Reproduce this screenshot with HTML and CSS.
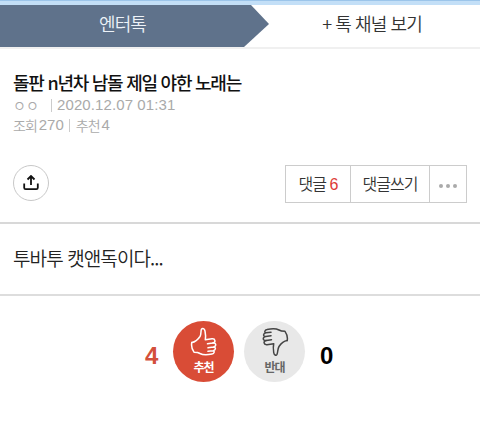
FILE: index.html
```html
<!DOCTYPE html>
<html lang="ko">
<head>
	<meta charset="utf-8">
	<title>엔터톡</title>
	<link rel="stylesheet" href="styles.css">
</head>
<body>
	<div class="topline"></div>
	<nav class="tabs">
		<div class="tab on"><span>엔터톡</span></div>
		<div class="tab more"><span>+ 톡 채널 보기</span></div>
	</nav>

	<header class="post-head">
		<h1>돌판 n년차 남돌 제일 야한 노래는</h1>
		<p class="info"><span class="writer">ㅇㅇ</span><i class="bar"></i><span class="date">2020.12.07 01:31</span></p>
		<p class="info second"><span class="ko">조회</span><span class="num">270</span><i class="bar"></i><span class="ko">추천</span><span class="num">4</span></p>
		<div class="tools">
			<button class="share">
				<svg width="16" height="16" viewBox="0 0 16 16" fill="none" stroke="#111" stroke-width="1.8">
					<path d="M8 10V1.500M4.500 4.500L8 1L11.500 4.500M1.200 8.500v4.200q0 1.500 1.500 1.500h10.600q1.500 0 1.500-1.500V8.500"/>
				</svg>
			</button>
			<div class="btns">
				<button class="count">댓글 <em>6</em></button>
				<button class="write">댓글쓰기</button>
				<button class="etc"><i></i><i></i><i></i></button>
			</div>
		</div>
	</header>

	<div class="content">투바투 캣앤독이다...</div>

	<div class="vote">
		<span class="score up">4</span>
		<button class="circle good">
			<svg width="28" height="30" viewBox="0 0 28 30" fill="none" stroke="#fff" stroke-width="1.5" stroke-linejoin="round" stroke-linecap="round">
				<path d="M1.800 15.500C5 15 8 12.500 10 9.500C11.500 7 10.500 4 11.500 2.200C12.500 .8 14.500 1.500 15 4C15.700 7.500 15.800 10 15.300 12.800L22 11.800C25.500 11.500 26 15.300 22.800 16L17.500 16.800"/>
				<path d="M22.800 16C26.500 15.500 26.700 19.300 23.300 20L18 20.800M23.300 20C26.300 20 26 23.200 23 23.700L18 24.300M23 23.700C25 24.200 24.300 26.600 22 27C17.500 28 13 28.200 10 26.500C8 25.200 6 25.200 4 25.200C1.800 22 1.200 18.500 1.800 15.500"/>
			</svg>
			<span>추천</span>
		</button>
		<button class="circle bad">
			<svg width="28" height="30" viewBox="0 0 28 30" fill="none" stroke="#444" stroke-width="1.5" stroke-linejoin="round" stroke-linecap="round">
				<path d="M26.200 13.500C23 14 20 16.500 18 19.500C16.500 22 17 25 16 27.300C15 29 13 28 12.700 25.500C12.200 22 12 19.500 12.700 16.700L6 17.700C2.500 18 2 14.200 5.200 13.500L10.500 12.700"/>
				<path d="M5.200 13.500C1.500 14 1.300 10.200 4.700 9.500L10 8.700M4.700 9.500C1.700 9.500 2 6.300 5 5.800L10 5.200M5 5.800C3 5.300 3.700 2.900 6 2.500C10.500 1.500 15 1.300 18 3C20 4.300 22 4.300 24 4.300C26.200 7.500 26.800 10.500 26.200 13.500"/>
			</svg>
			<span>반대</span>
		</button>
		<span class="score down">0</span>
	</div>
</body>
</html>
```

FILE: styles.css
```css
* {
	box-sizing: border-box;
}
body {
	margin: 0;
	background: #fff;
	color: #222;
	font-family: "Noto Sans CJK KR", sans-serif;
}
h1, p {
	margin: 0;
}
button {
	margin: 0;
	padding: 0;
	border: 0;
	background: none;
	color: inherit;
	font: inherit;
}
.topline {
	height: 5px;
	background: #c3dff7;
	border-top: 1px solid #9cc5ea;
}
.tabs {
	display: flex;
	height: 44px;
	border-bottom: 2px solid #f0f0f0;
}
.tab {
	height: 42px;
	line-height: 37px;
	font-size: 18px;
	font-weight: 350;
	text-align: center;
	white-space: nowrap;
}
.on {
	width: 269px;
	padding-right: 24px;
	background: #5f728b;
	color: #edf2f8;
	letter-spacing: -0.9px;
	clip-path: polygon(0 0, 251px 0, 100% 19px, 244px 100%, 0 100%);
}
.more {
	flex: 1;
	padding-right: 5px;
	color: #333;
	letter-spacing: -0.9px;
}
.post-head {
	height: 175px;
	padding: 21px 13px 0;
	border-bottom: 2px solid #d8d8d8;
}
h1 {
	height: 25px;
	line-height: 24px;
	font-size: 18px;
	font-weight: 500;
	color: #111;
	letter-spacing: -1.25px;
	white-space: nowrap;
}
.info {
	display: flex;
	align-items: center;
	height: 20px;
	font-size: 14px;
	font-weight: 350;
	line-height: 20px;
	color: #aaa;
}
.writer {
	width: 38px;
}
.bar {
	width: 1px;
	height: 13px;
	background: #ccc;
}
.date {
	margin-left: 5px;
	font-family: "Liberation Sans", sans-serif;
	font-size: 15px;
	letter-spacing: 0.1px;
}
.ko {
	letter-spacing: -1px;
}
.num {
	margin-left: 2px;
	font-family: "Liberation Sans", sans-serif;
	font-size: 15px;
}
.second .bar {
	margin: 0 6px 0 5px;
}
.tools {
	display: flex;
	justify-content: space-between;
	margin-top: 30px;
}
.share {
	display: flex;
	align-items: center;
	justify-content: center;
	width: 36px;
	height: 36px;
	border: 1px solid #c8c8c8;
	border-radius: 50%;
}
.btns {
	display: flex;
	height: 38px;
	border: 1px solid #ccc;
}
.btns button {
	font-size: 16px;
	font-weight: 350;
	letter-spacing: -1px;
	line-height: 34px;
	padding-bottom: 2px;
	color: #333;
}
.btns button + button {
	border-left: 1px solid #ccc;
}
.btns .count {
	width: 64px;
}
.btns .write {
	width: 79px;
}
.btns .etc {
	display: flex;
	align-items: center;
	justify-content: center;
	gap: 3px;
	width: 37px;
	padding-top: 6px;
}
.etc i {
	width: 4px;
	height: 4px;
	border-radius: 50%;
	background: #aaa;
}
em {
	font-family: "Liberation Sans", sans-serif;
	font-style: normal;
	color: #dd3c38;
}
.content {
	height: 72px;
	padding-left: 13px;
	border-bottom: 2px solid #ddd;
	font-size: 19px;
	font-weight: 350;
	line-height: 68px;
	letter-spacing: -0.9px;
	color: #222;
}
.vote {
	display: flex;
	padding: 25px 0 0 145px;
}
.score {
	font-family: "Liberation Sans", sans-serif;
	font-size: 24px;
	font-weight: bold;
	line-height: 70px;
}
.up {
	width: 28px;
	color: #d3503b;
}
.down {
	margin-left: 15px;
	color: #000;
}
.circle {
	display: flex;
	flex-direction: column;
	align-items: center;
	width: 61px;
	height: 61px;
	padding-top: 6px;
	border-radius: 50%;
	font-size: 12px;
	font-weight: bold;
	line-height: 19px;
	letter-spacing: -1px;
}
.good {
	background: #d94c36;
	color: #fff;
}
.bad {
	margin-left: 10px;
	background: #e8e8e8;
	color: #666;
}
```
